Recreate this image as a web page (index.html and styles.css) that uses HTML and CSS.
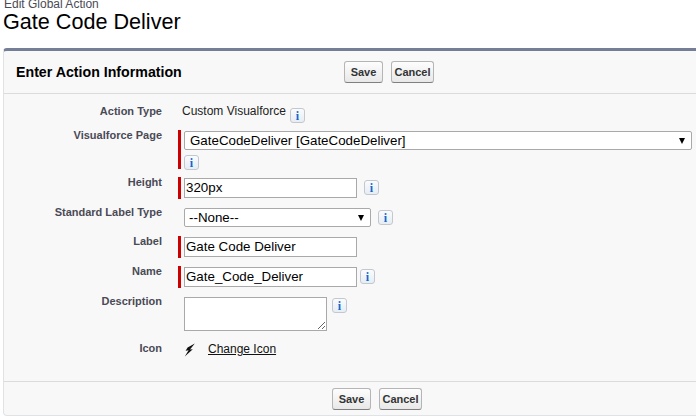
FILE: index.html
```html
<!DOCTYPE html>
<html lang="en">
<head>
    <meta charset="UTF-8">
    <title>Edit Global Action</title>
    <link rel="stylesheet" href="styles.css">
</head>
<body>
    <div class="page-head">
        <div class="page-type">Edit Global Action</div>
        <h1 class="page-title">Gate Code Deliver</h1>
    </div>
    <form class="panel">
        <div class="panel-head">
            <h2 class="panel-title">Enter Action Information</h2>
            <div class="buttons">
                <button type="button" class="btn btn-save">Save</button>
                <button type="button" class="btn btn-cancel">Cancel</button>
            </div>
        </div>
        <div class="panel-body">
            <div class="row row-type">
                <label class="row-label">Action Type</label>
                <div class="row-field">
                    <span class="value">Custom Visualforce</span>
                    <span class="info">i</span>
                </div>
            </div>
            <div class="row row-page">
                <label class="row-label">Visualforce Page</label>
                <div class="row-field required stacked">
                    <div class="select-wrap select-wide">
                        <select><option>GateCodeDeliver [GateCodeDeliver]</option></select>
                    </div>
                    <span class="info">i</span>
                </div>
            </div>
            <div class="row row-height">
                <label class="row-label">Height</label>
                <div class="row-field required">
                    <input type="text" value="320px">
                    <span class="info">i</span>
                </div>
            </div>
            <div class="row row-standard">
                <label class="row-label">Standard Label Type</label>
                <div class="row-field">
                    <div class="select-wrap select-small">
                        <select><option>--None--</option></select>
                    </div>
                    <span class="info">i</span>
                </div>
            </div>
            <div class="row row-text">
                <label class="row-label">Label</label>
                <div class="row-field required">
                    <input type="text" value="Gate Code Deliver">
                </div>
            </div>
            <div class="row row-text row-name">
                <label class="row-label">Name</label>
                <div class="row-field required">
                    <input type="text" value="Gate_Code_Deliver">
                    <span class="info">i</span>
                </div>
            </div>
            <div class="row row-desc">
                <label class="row-label">Description</label>
                <div class="row-field top">
                    <textarea></textarea>
                    <span class="info">i</span>
                </div>
            </div>
            <div class="row row-icon">
                <label class="row-label">Icon</label>
                <div class="row-field">
                    <svg class="bolt" width="12" height="14" viewBox="0 0 12 14"><path d="M10.8 0.4 L3.6 4.6 L1.6 7.8 L4.6 7.2 L0.8 13.4 L8.8 6.2 L6 6.4 Z"/></svg>
                    <a class="link" href="#">Change Icon</a>
                </div>
            </div>
        </div>
        <div class="panel-foot">
            <button type="button" class="btn btn-save">Save</button>
            <button type="button" class="btn btn-cancel">Cancel</button>
        </div>
    </form>
</body>
</html>
```

FILE: styles.css
```css
html, body {
    margin: 0;
    padding: 0;
    height: 416px;
    overflow: hidden;
    background-color: #fff;
}

body {
    font-family: "Liberation Sans", Arial, sans-serif;
    font-size: 12px;
    color: #222;
}

.page-head {
    margin-top: -3px;
    margin-left: 4px;
    height: 51px;
}

.page-type {
    font-size: 12px;
    line-height: 14px;
    color: #4a4a56;
}

.page-title {
    margin: 0 0 0 -1px;
    font-size: 21.6px;
    font-weight: normal;
    line-height: 21px;
    color: #000;
}

.panel {
    margin-left: 3px;
    margin-right: -6px;
    height: 368px;
    box-sizing: border-box;
    background-color: #f8f8f8;
    border: 1px solid #e0e3e5;
    border-top: 3px solid #747e96;
    border-radius: 4px;
    display: flex;
    flex-direction: column;
}

.panel-head {
    height: 42px;
    border-bottom: 1px solid #dbdbdb;
    display: flex;
    align-items: center;
    flex-shrink: 0;
}

.panel-title {
    margin: 0 0 0 12px;
    width: 328px;
    font-size: 14.2px;
    font-weight: bold;
    color: #000;
}

.buttons {
    display: flex;
    gap: 8px;
}

.btn {
    height: 22px;
    padding: 0;
    box-sizing: border-box;
    font-family: "Liberation Sans", Arial, sans-serif;
    font-size: 11px;
    font-weight: bold;
    color: #333435;
    background: linear-gradient(#fdfdfd, #e8e8e9);
    border: 1px solid #b5b5b5;
    border-bottom-color: #7f7f7f;
    border-radius: 3px;
}

.btn-save {
    width: 39px;
}

.btn-cancel {
    width: 43px;
}

.panel-body {
    flex: 1;
    padding-top: 9px;
}

.row {
    display: grid;
    grid-template-columns: 158px 1fr;
    column-gap: 16px;
}

.row-label {
    margin-top: -2px;
    text-align: right;
    font-size: 11px;
    font-weight: bold;
    color: #4a4a56;
    line-height: 14px;
}

.row-field {
    display: flex;
    align-items: center;
    padding-left: 6px;
}

.row-field.top {
    align-items: flex-start;
}

.row-field.stacked {
    flex-direction: column;
    align-items: flex-start;
}

.required {
    padding-left: 3px;
    border-left: 3px solid #c00;
}

.row-type {
    height: 27px;
}

.row-type .row-label {
    margin-top: 1px;
}

.row-type .row-field {
    align-items: flex-start;
    padding-left: 4px;
}

.row-type .value {
    margin-top: 1px;
    line-height: 14px;
}

.row-type .info {
    margin-top: 5px;
    margin-left: 4px;
}

.row-page {
    height: 39px;
    margin-bottom: 8px;
}

.row-page .required {
    box-sizing: border-box;
    height: 39px;
    padding-top: 1px;
    justify-content: space-between;
}

.row-page .info {
    margin-left: 0;
    margin-bottom: -1px;
}

.row-height {
    height: 22px;
    margin-bottom: 9px;
}

.row-height .info {
    margin-bottom: 2px;
}

.row-standard {
    height: 19px;
    margin-bottom: 9px;
}

.row-standard .row-label {
    margin-top: -3px;
}

.row-text {
    height: 22px;
    margin-bottom: 8px;
}

.row-name .info {
    margin-left: 3px;
    margin-bottom: 2px;
}

.row-desc {
    height: 34px;
    margin-bottom: 10px;
    padding-top: 1px;
}

.row-desc .row-label {
    margin-top: -3px;
}

.row-desc .info {
    margin-left: 5px;
    margin-top: 1px;
}

.row-icon {
    height: 18px;
    margin-top: -1px;
}

.row-icon .row-label {
    margin-top: 1px;
}

.value {
    font-size: 12px;
    color: #222;
}

input,
select,
textarea {
    box-sizing: border-box;
    margin: 0;
    font-family: "Liberation Sans", Arial, sans-serif;
    font-size: 13.33px;
    color: #000;
    background-color: #fff;
    border: 1px solid #a9a9a9;
}

input {
    width: 173px;
    height: 20px;
    padding: 0 1px 2px;
}

textarea {
    display: block;
    width: 143px;
    height: 34px;
}

.select-wrap {
    position: relative;
}

.select-wrap select {
    display: block;
    width: 100%;
    appearance: none;
    padding: 0 0 0 4px;
    border-radius: 2px;
}

.select-wrap::after {
    content: "";
    position: absolute;
    top: 7px;
    right: 7px;
    border-left: 3px solid transparent;
    border-right: 3px solid transparent;
    border-top: 6px solid #000;
}

.select-wide {
    width: 508px;
}

.select-wide select {
    height: 19px;
    padding-left: 5px;
}

.select-small {
    width: 187px;
}

.select-small select {
    height: 19px;
}

.info {
    display: inline-block;
    flex-shrink: 0;
    width: 15px;
    height: 15px;
    box-sizing: border-box;
    margin-left: 7px;
    text-align: center;
    font-family: "Liberation Serif", serif;
    font-size: 12px;
    font-weight: bold;
    line-height: 14px;
    color: #1468c8;
    background: linear-gradient(#fafbfd, #e6edf5);
    border: 1px solid #c4c8cc;
    border-radius: 3px;
}

.bolt {
    margin-top: 2px;
    fill: #111;
}

.link {
    margin-left: 12px;
    font-size: 12px;
    color: #111;
}

.panel-foot {
    height: 34px;
    border-top: 1px solid #dbdbdb;
    display: flex;
    gap: 8px;
    padding: 6px 0 0 328px;
    flex-shrink: 0;
    box-sizing: border-box;
}
```
